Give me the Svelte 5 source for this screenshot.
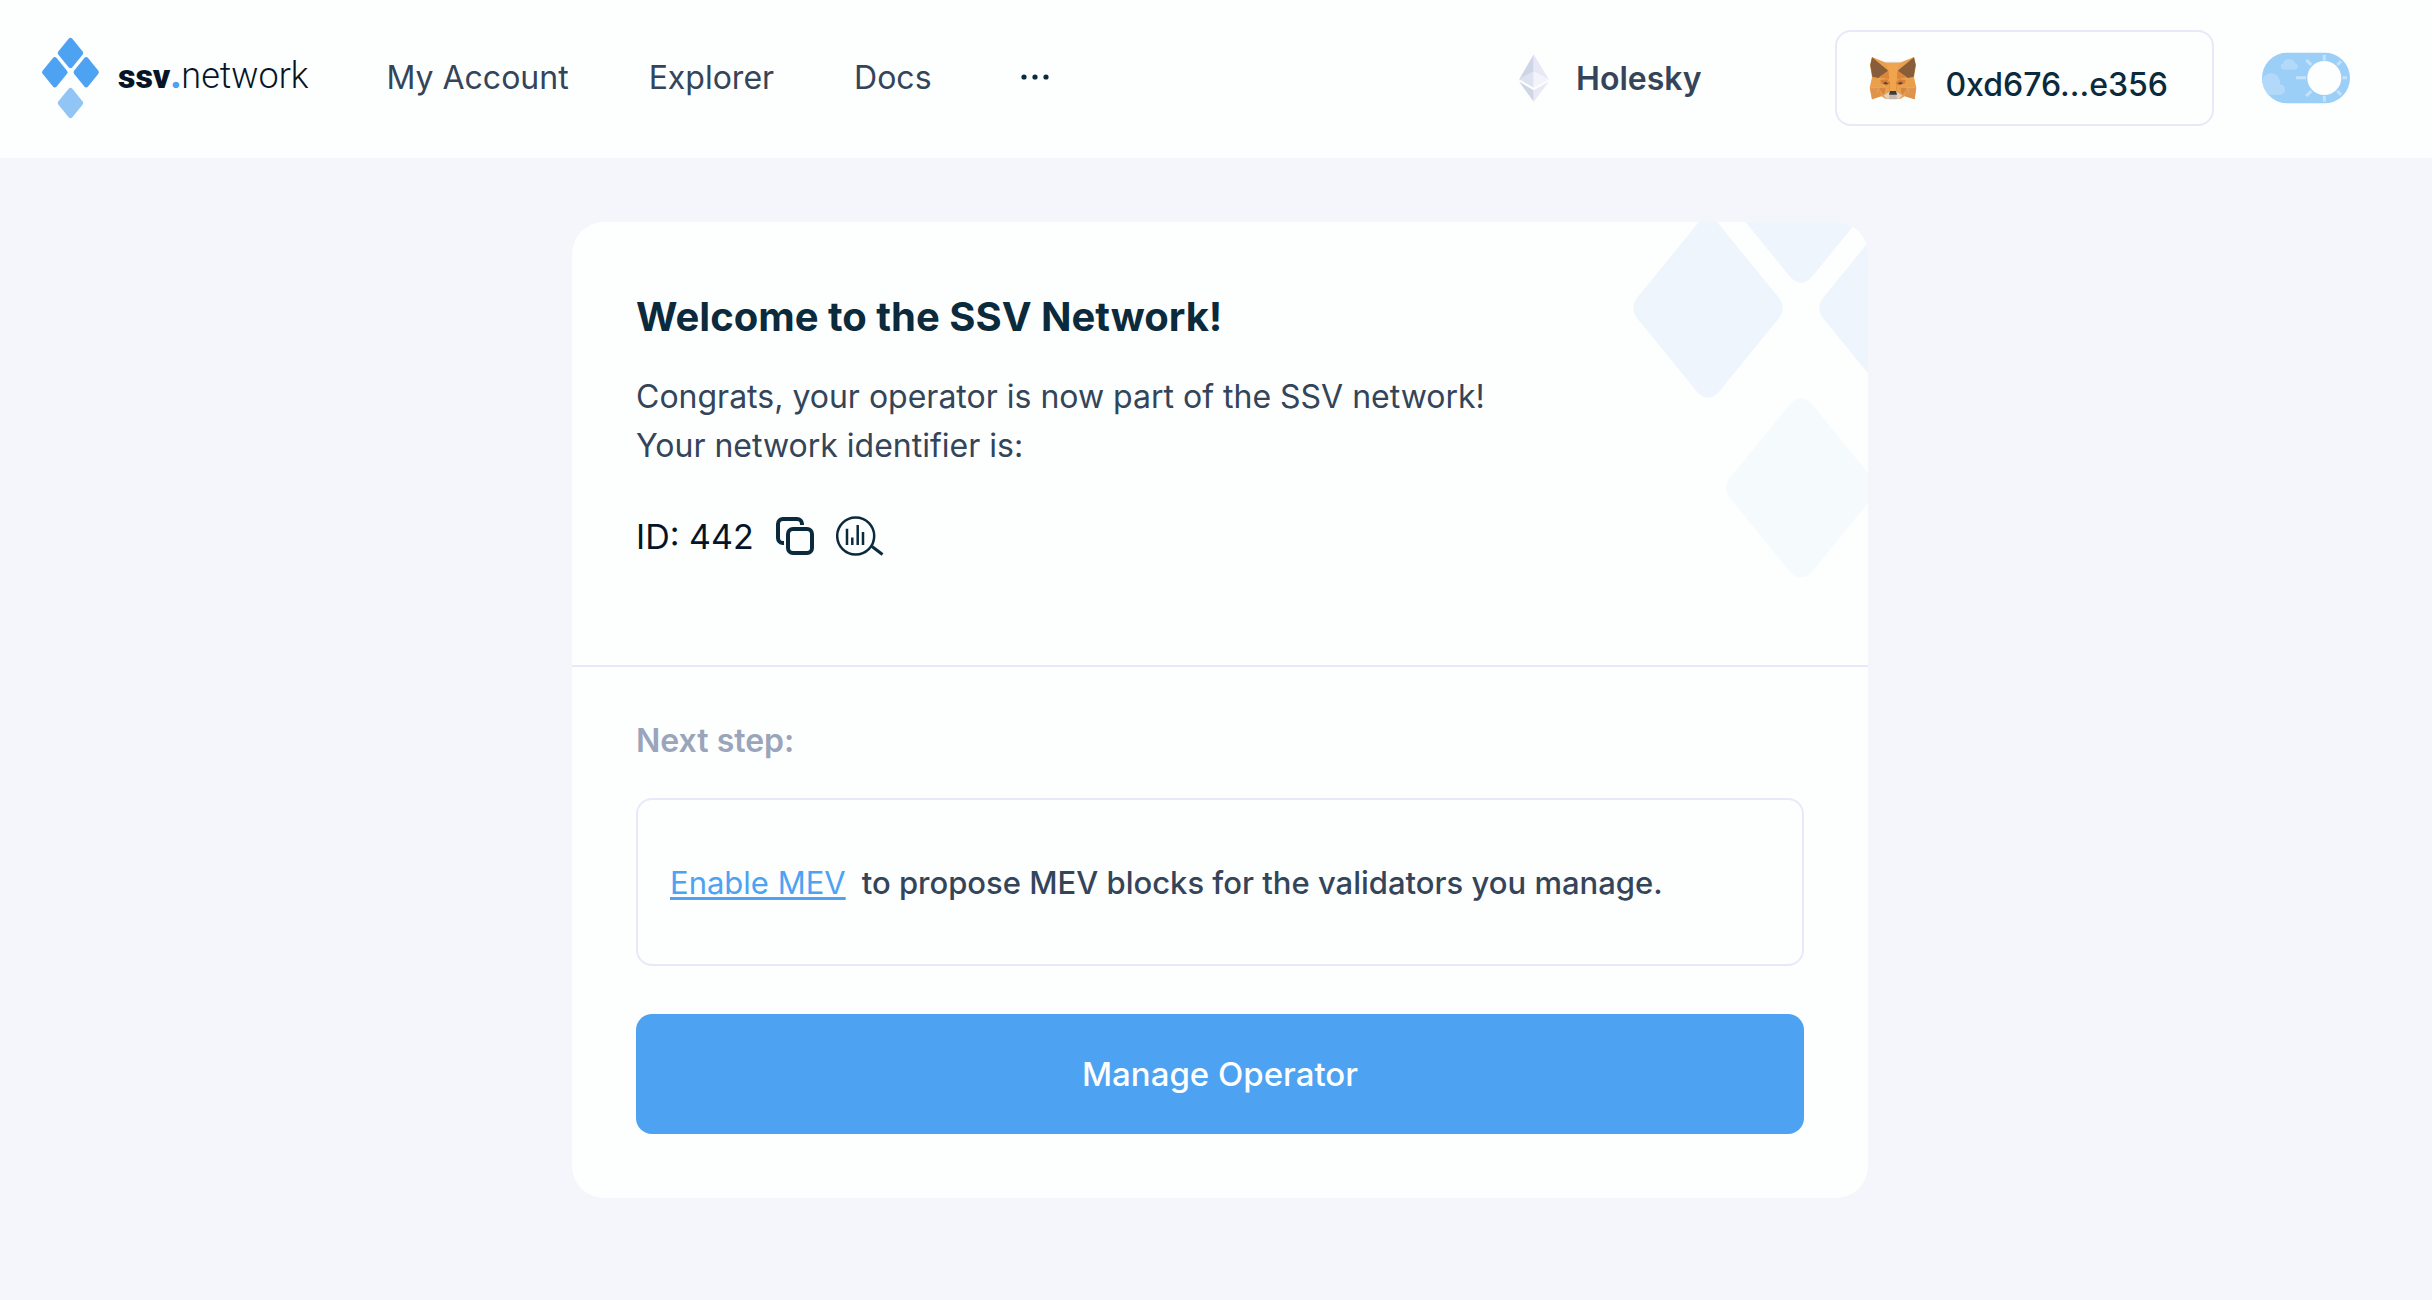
<script>
  const links = ['My Account', 'Explorer', 'Docs'];
  // One rounded rhombus, centred on the origin; reused by the logo and the card artwork.
  const rhombus =
    'M-70.5 -10.7L-12 -82.5Q0 -97 12 -82.5L70.5 -10.7Q79 0 70.5 10.7L12 82.5Q0 97 -12 82.5L-70.5 10.7Q-79 0 -70.5 -10.7Z';
  let light = $state(true);
</script>

<div class="page">
  <header>
    <a class="logo" href="#home" aria-label="ssv.network">
      <svg width="58" height="82" viewBox="0 0 58 82" fill="#4da2f1" aria-hidden="true">
        <path d={rhombus} transform="translate(28.5 16) scale(.17)" />
        <path d={rhombus} transform="translate(12.8 35.3) scale(.17)" />
        <path d={rhombus} transform="translate(44.2 35.3) scale(.17)" />
        <path d={rhombus} transform="translate(28.5 66) scale(.17)" opacity=".62" />
      </svg>
      <span class="wordmark"><b>ssv</b><i>.</i>network</span>
    </a>
    <nav>
      {#each links as link}
        <a href="#{link}">{link}</a>
      {/each}
      <button class="more" aria-label="More">
        <svg width="30" height="8" viewBox="0 0 30 8" fill="#0b2a3c">
          <circle cx="4" cy="4" r="2.6" /><circle cx="15" cy="4" r="2.6" /><circle cx="26" cy="4" r="2.6" />
        </svg>
      </button>
    </nav>
    <button class="chain">
      <svg width="32" height="50" viewBox="0 0 32 50" aria-hidden="true">
        <path fill="#cfd5e4" d="M15.7 1.3 1 26.7 15.7 18.7Z" />
        <path fill="#e6e8f6" d="M15.7 1.3 31 26.7 15.7 18.7Z" />
        <path fill="#dfe2f1" d="M1 26.3 15.7 18.3V34.7Z" />
        <path fill="#f3f3fb" d="M31 26.3 15.7 18.3V34.7Z" />
        <path fill="#cfd5e4" d="M1 28.6 15.7 37.3V48.7Z" />
        <path fill="#e8e8f7" d="M31 28.6 15.7 37.3V48.7Z" />
      </svg>
      Holesky
    </button>
    <button class="wallet">
      <svg width="48" height="48" viewBox="18 12 144 144" aria-hidden="true">
        <path fill="#e9a04d" d="M27 21 66 37H114L153 21 159 45 153 82 160 113 155 148 126 138 112 147H68L54 138 27 148 20 113 27 82 21 45Z" />
        <path fill="#e6cdb5" d="M66 35H114L111 39H69Z" />
        <path fill="#875d3a" d="M27 22 76 62 46 84 28 80 22 45ZM153 22 104 62 134 84 152 80 158 45Z" />
        <path fill="#dc8639" d="M76 62 48 82 80 88 84 108 78 122 80 70ZM104 62 132 82 100 88 96 108 102 122 100 70Z" />
        <path fill="#efa44d" d="M70 40H110L103 62 99 122H81L77 62Z" />
        <path fill="#e0934a" d="M21 114 48 113 55 139 27 148ZM159 114 132 113 125 139 155 148Z" />
        <path fill="#d58544" d="M48 113 68 112 63 136 55 126ZM132 113 112 112 117 136 125 126Z" />
        <path fill="none" stroke="#efc08c" stroke-width="1" d="M21 114 68 112 46 84M159 114 112 112 134 84M48 113 42 130M132 113 138 130" />
        <path fill="#d67f36" d="M52 90 72 88 82 100 70 107 54 100ZM128 90 108 88 98 100 110 107 126 100Z" />
        <path fill="#5a4538" d="M60 99 68 95 77 102 66 103ZM120 99 112 95 103 102 114 103Z" />
        <path fill="#ded1c7" d="M62 136 80 125H100L118 136 110 146H70Z" />
        <path fill="#c5b8ac" d="M80 134H100L102 148H78Z" />
        <path fill="#3b3b3d" d="M81 123H99L102 134H78Z" />
      </svg>
      <span>0xd676...e356</span>
    </button>
    <label class="theme">
      <input type="checkbox" bind:checked={light} aria-label="Light theme" />
      <svg width="88" height="52" viewBox="0 0 88 51" aria-hidden="true">
        <clipPath id="pill"><rect width="88" height="51" rx="25.5" /></clipPath>
        <g clip-path="url(#pill)">
          <rect width="88" height="51" fill="#9ccff8" />
          <g fill="#b2d9f9">
            <path d="M21.5 17a3.2 3.2 0 0 1-.3-6.3A6.3 6.3 0 0 1 33 10.5a3.3 3.3 0 0 1 0 6.5Z" />
            <path d="M0 42.3V28a8.7 8.7 0 0 1 17.8 3.7A5.4 5.4 0 0 1 19 42.3Z" />
          </g>
          <path stroke="#c4e3fb" stroke-width="3" d="M62.3 2.5V8M62.3 43.5V49M80.5 25.3H85M34 25.3H44M44.3 7.5 49.3 12.5M44.3 43.5 49.3 38.5M79 8.8 75.3 12.5M75.3 38.5 79 42.2" />
          <circle cx="62.3" cy="25.5" r="17" fill="#fdfefe" />
        </g>
      </svg>
    </label>
  </header>

  <div class="content">
    <main>
      <section class="intro">
        <svg class="art" width="235" height="355" viewBox="0 0 235 355" fill="#eff5fd" aria-hidden="true">
          <path d={rhombus} transform="translate(75 86)" />
          <path d={rhombus} transform="translate(168 -29)" />
          <path d={rhombus} transform="translate(261 86)" />
          <path d={rhombus} transform="translate(168 266)" fill="#f5fafd" />
        </svg>
        <h1>Welcome to the SSV Network!</h1>
        <p>Congrats, your operator is now part of the SSV network!<br />Your network identifier is:</p>
        <div class="ident">
          <span>ID: 442</span>
          <button aria-label="Copy ID">
            <svg width="40" height="40" viewBox="0 0 40 40" fill="none" stroke="#0b2a3c" stroke-width="4">
              <rect x="13" y="13" width="24" height="24" rx="5" />
              <path d="M27 9V8a5 5 0 0 0-5-5H8a5 5 0 0 0-5 5V22a5 5 0 0 0 5 5h1" />
            </svg>
          </button>
          <a href="#explorer" aria-label="View in explorer">
            <svg width="48" height="40" viewBox="0 0 48 40" fill="none" stroke="#0b2a3c" stroke-width="2.5">
              <circle cx="19.7" cy="20" r="18.5" />
              <path d="M36 30.5 46.5 38.5" stroke-width="3" />
              <path d="M11 12.7V29M16.3 21.5V29M21.7 9V29M27 16V29" />
            </svg>
          </a>
        </div>
      </section>
      <section class="next">
        <h2>Next step:</h2>
        <div class="step"><a href="#mev">Enable MEV</a><span>to propose MEV blocks for the validators you manage.</span></div>
        <button class="primary">Manage Operator</button>
      </section>
    </main>
  </div>
</div>

<style>
  :global(body) {
    margin: 0;
    background: #f5f6fb;
  }
  .page {
    font-family: Inter, 'Liberation Sans', sans-serif;
    font-size: 32px;
    color: #34455a;
  }
  button {
    font: inherit;
    color: inherit;
    background: none;
    border: 0;
    padding: 0;
    cursor: pointer;
  }
  a {
    color: inherit;
    text-decoration: none;
  }
  svg {
    display: block;
    flex: none;
  }
  header {
    display: flex;
    align-items: center;
    box-sizing: border-box;
    padding: 30px 82px 32px 42px;
    background: #fdfefe;
  }
  .logo {
    display: flex;
    align-items: center;
    gap: 18px;
  }
  .wordmark {
    padding-bottom: 4px;
    font: 300 36px/44px Roboto, sans-serif;
    color: #051527;
  }
  .wordmark b {
    font-weight: 900;
    font-size: 34px;
  }
  .wordmark i {
    font-style: normal;
    font-weight: 900;
    color: #4da2f1;
  }
  nav {
    display: flex;
    align-items: center;
    gap: 80px;
    margin-left: 78px;
    margin-right: auto;
    padding-bottom: 2px;
  }
  .more {
    padding: 8px;
  }
  .chain {
    display: flex;
    align-items: center;
    gap: 26px;
    margin-right: 134px;
    font-weight: 600;
  }
  .wallet {
    display: flex;
    align-items: center;
    gap: 28px;
    height: 96px;
    box-sizing: border-box;
    padding: 0 44px 0 32px;
    border: 2px solid #e8e8f8;
    border-radius: 16px;
    font-weight: 500;
    color: #0b2a3c;
  }
  .wallet span {
    padding-top: 12px;
  }
  .theme {
    display: block;
    position: relative;
    margin-left: 48px;
    cursor: pointer;
  }
  .theme input {
    position: absolute;
    inset: 0;
    width: 100%;
    height: 100%;
    margin: 0;
    opacity: 0;
  }
  .content {
    padding: 64px 0 64px 8px;
  }
  main {
    max-width: 1296px;
    margin: 0 auto;
    background: #fdfefe;
    border-radius: 32px;
    overflow: hidden;
  }
  .intro {
    position: relative;
    padding: 65px 64px 109px;
    border-bottom: 2px solid #e8e8f8;
  }
  .art {
    position: absolute;
    top: 0;
    right: 0;
  }
  h1 {
    margin: 0 0 25px;
    font-size: 40px;
    line-height: 60px;
    font-weight: 750;
    color: #0b2a3c;
  }
  p {
    margin: 0 0 46px;
    line-height: 49px;
  }
  .ident {
    display: flex;
    align-items: center;
    gap: 21px;
    height: 40px;
    font-size: 34px;
    color: #051527;
  }
  .next {
    padding: 50px 64px 64px;
  }
  h2 {
    margin: 0 0 33px;
    font-size: 32px;
    line-height: 48px;
    font-weight: 600;
    color: #9aa5bb;
  }
  .step {
    display: flex;
    align-items: center;
    gap: 16px;
    height: 168px;
    box-sizing: border-box;
    padding: 0 32px;
    border: 2px solid #e8e8f8;
    border-radius: 16px;
    font-size: 31px;
  }
  .step a {
    color: #4da2f1;
    text-decoration: underline;
    text-decoration-thickness: 3px;
    text-underline-offset: 3px;
  }
  .step span {
    font-weight: 450;
  }
  .primary {
    display: block;
    width: 100%;
    height: 120px;
    margin-top: 48px;
    border-radius: 16px;
    background: #4da2f1;
    color: #fdfefe;
    font-size: 33px;
    font-weight: 500;
  }
</style>
